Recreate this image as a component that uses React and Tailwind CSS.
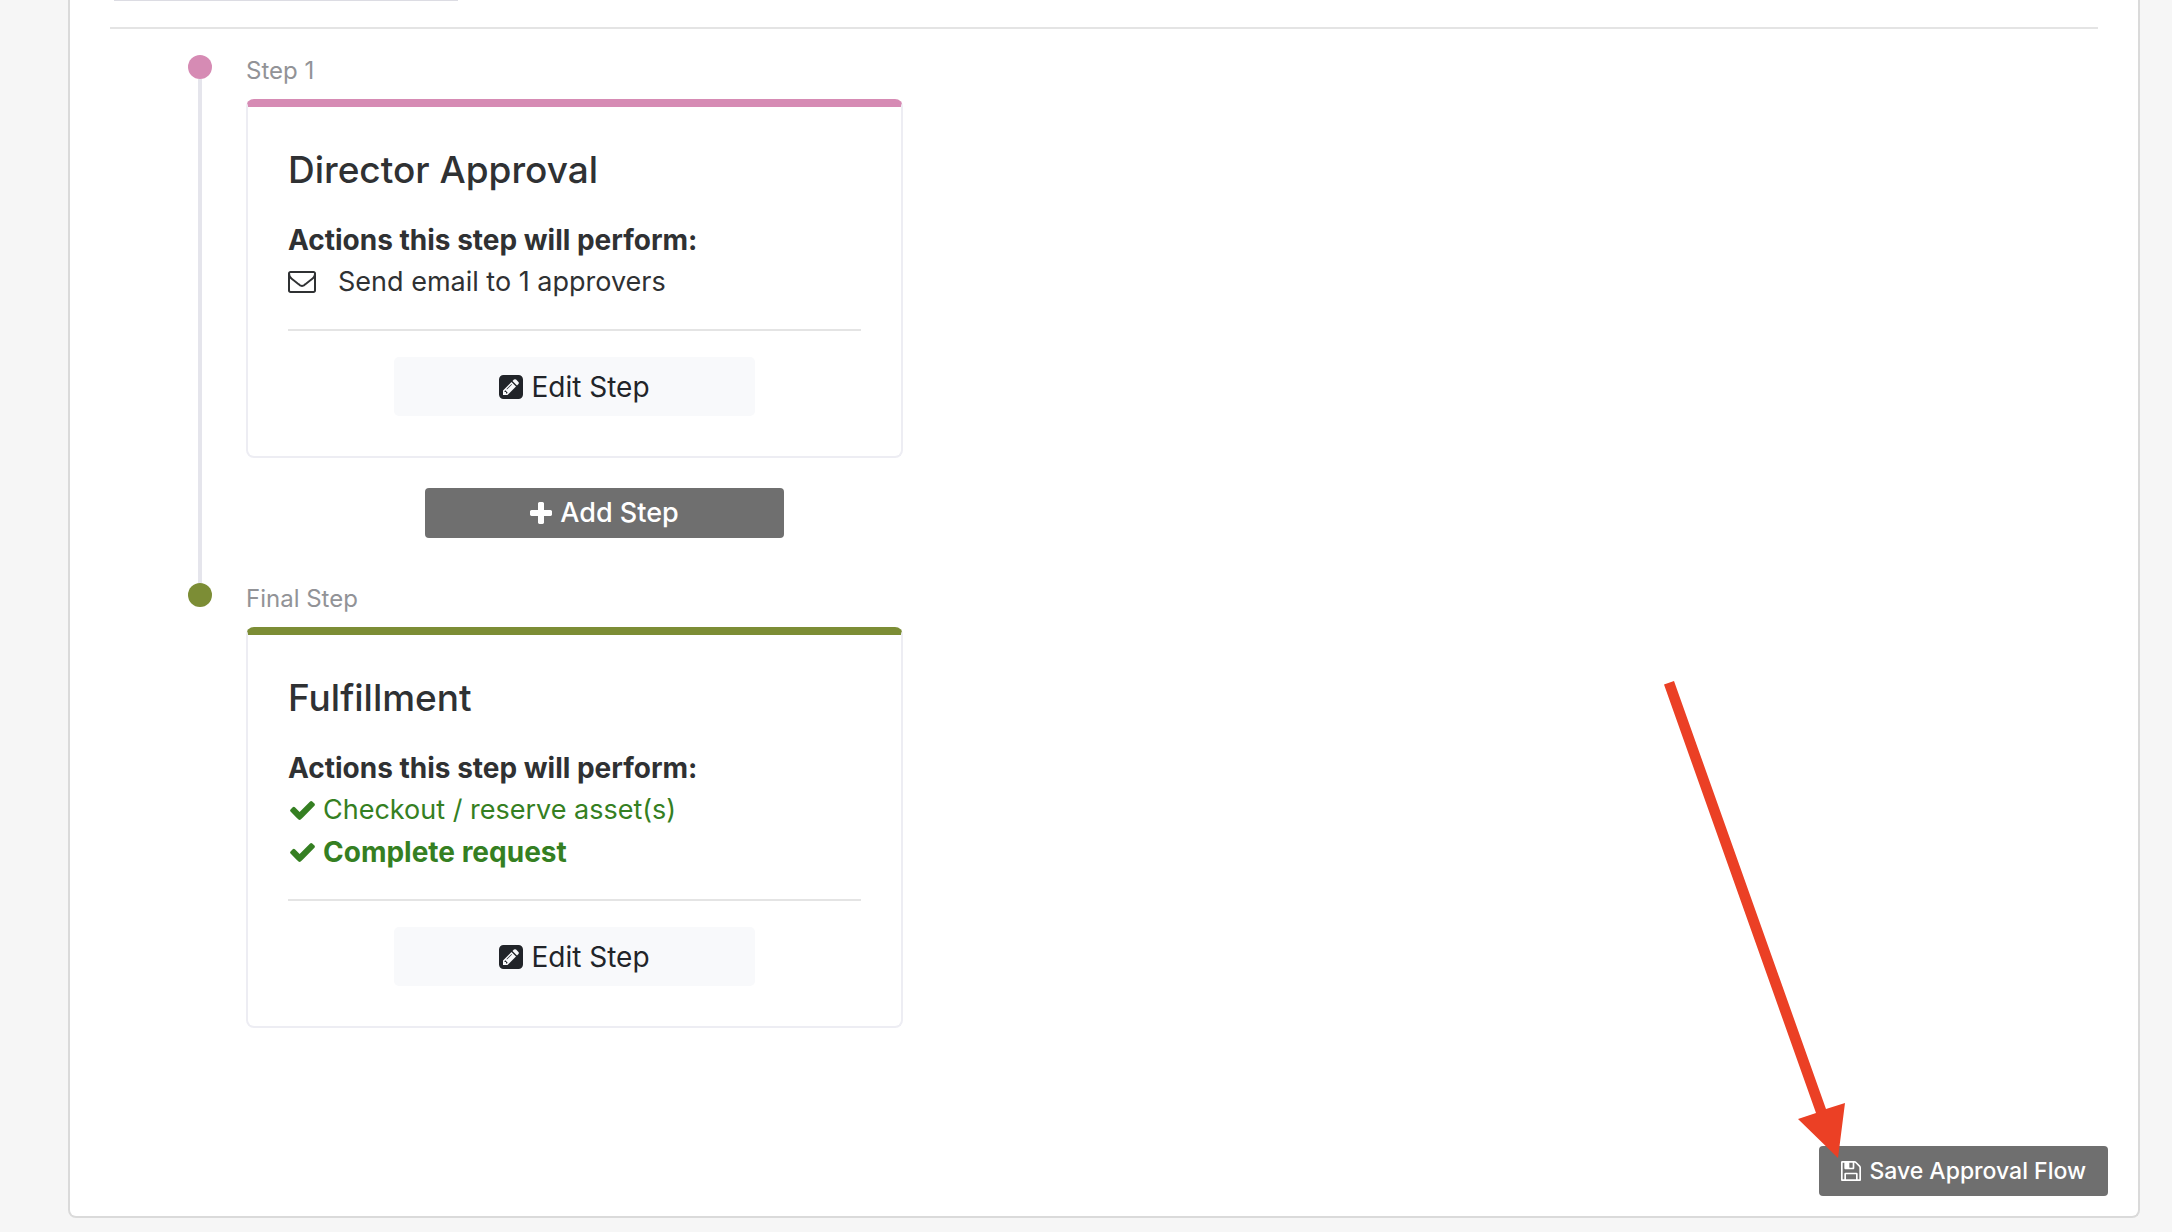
const ICONS = {
  envelope: {
    viewBox: "0 256 1792 1408",
    d: "M1664 1504v-768q-32 36-69 66-268 206-426 338-51 43-83 67t-86.500 48.500-102.500 24.500h-2q-48 0-102.500-24.500t-86.500-48.500-83-67q-158-132-426-338-37-30-69-66v768q0 13 9.500 22.500t22.500 9.500h1472q13 0 22.500-9.500t9.500-22.500zm0-1051v-24.500l-.5-13-3-12.500-5.500-9-9-7.500-14-2.500h-1472q-13 0-22.500 9.500t-9.500 22.500q0 168 147 284 193 152 401 317 6 5 35 29.500t46 37.500 44.500 31.500 50.500 27.500 43 9h2q20 0 43-9t50.500-27.500 44.500-31.500 46-37.500 35-29.500q208-165 401-317 54-43 100.500-115.500t46.500-131.500zm128-37v1088q0 66-47 113t-113 47h-1472q-66 0-113-47t-47-113v-1088q0-66 47-113t113-47h1472q66 0 113 47t47 113z",
  },
  pencilSquare: {
    viewBox: "0 128 1536 1536",
    d: "M404 1108l152 152-52 52h-56v-96h-96v-56zm414-390q14 13-3 30l-291 291q-17 17-30 3-14-13 3-30l291-291q17-17 30-3zm-274 690l544-544-288-288-544 544v288h288zm608-608l92-92q28-28 28-68t-28-68l-152-152q-28-28-68-28t-68 28l-92 92zm384-384v960q0 119-84.500 203.500t-203.500 84.500h-960q-119 0-203.500-84.500t-84.500-203.500v-960q0-119 84.500-203.500t203.500-84.500h960q119 0 203.500 84.500t84.500 203.500z",
  },
  plus: {
    viewBox: "192 128 1408 1408",
    d: "M1600 736v192q0 40-28 68t-68 28h-416v416q0 40-28 68t-68 28h-192q-40 0-68-28t-28-68v-416h-416q-40 0-68-28t-28-68v-192q0-40 28-68t68-28h416v-416q0-40 28-68t68-28h192q40 0 68 28t28 68v416h416q40 0 68 28t28 68z",
  },
  check: {
    viewBox: "121 334 1550 1188",
    d: "M1671 566q0 40-28 68l-724 724-136 136q-28 28-68 28t-68-28l-136-136-362-362q-28-28-28-68t28-68l136-136q28-28 68-28t68 28l294 295 656-657q28-28 68-28t68 28l136 136q28 28 28 68z",
  },
  floppy: {
    viewBox: "128 128 1536 1536",
    d: "M512 1536h768v-384h-768v384zm896 0h128v-896q0-14-10-38.500t-20-34.500l-281-281q-10-10-34-20t-39-10v416q0 40-28 68t-68 28h-576q-40 0-68-28t-28-68v-416h-128v1280h128v-416q0-40 28-68t68-28h832q40 0 68 28t28 68v416zm-384-928v-320q0-13-9.500-22.500t-22.500-9.500h-192q-13 0-22.500 9.500t-9.500 22.500v320q0 13 9.500 22.500t22.500 9.500h192q13 0 22.500-9.500t9.500-22.500zm640 32v928q0 40-28 68t-68 28h-1344q-40 0-68-28t-28-68v-1344q0-40 28-68t68-28h928q40 0 88 20t76 48l280 280q28 28 48 76t20 88z",
  },
};

function Icon({ name, className }) {
  const { viewBox, d } = ICONS[name];
  return (
    <svg viewBox={viewBox} className={`shrink-0 fill-current ${className}`} aria-hidden="true">
      <path d={d} />
    </svg>
  );
}

function Step({ label, title, dot, border, connected, children, footer }) {
  return (
    <li className="flex">
      <div className="mr-[34px] flex w-6 shrink-0 flex-col items-center">
        <span className={`size-6 shrink-0 rounded-full ${dot}`} />
        {connected && <span className="w-1 grow bg-[#e5e5ec]" />}
      </div>
      <div className="w-full max-w-[657px]">
        <p className="mb-3 text-2xl leading-8 text-[#929397]">{label}</p>
        <section className={`rounded-lg border-2 border-t-8 border-[#ededf3] p-10 ${border}`}>
          <h2 className="mb-[26px] text-[37px] leading-[46px] font-medium">{title}</h2>
          <p className="font-bold">Actions this step will perform:</p>
          {children}
          <hr className="my-[26px] border-t-2 border-[#e4e4e4]" />
          <button
            type="button"
            className="mx-auto flex h-[59px] w-[63%] items-center justify-center gap-2 rounded-[5px] bg-[#f8f9fb] text-[#212429]"
          >
            <Icon name="pencilSquare" className="size-6" />
            Edit Step
          </button>
        </section>
        {footer}
      </div>
    </li>
  );
}

export default function App() {
  return (
    <div className="min-h-screen bg-[#f6f6f6] pr-8 pb-[14px] pl-[68px] font-['Inter',sans-serif] text-[28px] leading-[42px] text-[#2f3133]">
      <main className="flex min-h-[1218px] flex-col rounded-b-lg border-2 border-t-0 border-[#dadada] bg-white">
        <div className="mx-10">
          <div className="ml-1 h-px w-[344px] bg-[#dcdce3]" />
          <hr className="mt-[26px] border-t-2 border-[#e4e4e4]" />
        </div>
        <ol className="mt-[26px] ml-[118px]">
          <Step
            label="Step 1"
            title="Director Approval"
            dot="bg-[#d68bb4]"
            border="border-t-[#d68bb4]"
            connected
            footer={
              <div className="flex justify-center pt-[30px] pb-[45px] pl-[60px]">
                <button
                  type="button"
                  className="flex h-[50px] w-[359px] items-center justify-center gap-2 rounded bg-[#6f6f6f] text-[27px] font-medium text-white"
                >
                  <Icon name="plus" className="size-[22px]" />
                  Add Step
                </button>
              </div>
            }
          >
            <p className="flex items-center gap-[22px] text-[27px]">
              <Icon name="envelope" className="h-[22px] w-7" />
              Send email to 1 approvers
            </p>
          </Step>
          <Step label="Final Step" title="Fulfillment" dot="bg-[#7c8d35]" border="border-t-[#7c8d35]">
            <p className="flex items-center gap-2 pl-0.5 text-[27px] text-[#357f22]">
              <Icon name="check" className="h-[19px] w-[25px]" />
              Checkout / reserve asset(s)
            </p>
            <p className="flex items-center gap-2 pl-0.5 font-bold text-[#357f22]">
              <Icon name="check" className="h-[19px] w-[25px]" />
              Complete request
            </p>
          </Step>
        </ol>
        <div className="relative mt-auto mr-[30px] mb-5 self-end">
          <button
            type="button"
            className="flex h-[50px] items-center gap-2 rounded bg-[#6f6f6f] px-[22px] text-[23px] font-medium text-white"
          >
            <Icon name="floppy" className="size-5" />
            Save Approval Flow
          </button>
          <svg
            viewBox="0 0 182 478"
            className="pointer-events-none absolute right-[262px] bottom-[37px] h-[478px] w-[182px] fill-[#eb4025]"
            aria-hidden="true"
          >
            <path d="M0 3.500L10 0L162 428L181 422L174 477L134 438L152 432Z" />
          </svg>
        </div>
      </main>
    </div>
  );
}
